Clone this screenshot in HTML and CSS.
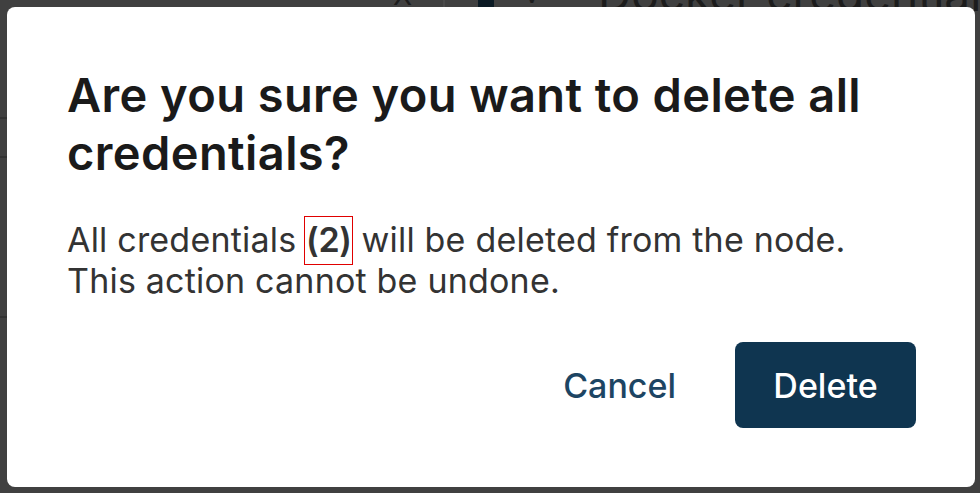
FILE: index.html
```html
<!DOCTYPE html>
<html lang="en">
<head>
<meta charset="utf-8">
<title>Delete all credentials</title>
<link rel="stylesheet" href="styles.css">
</head>
<body>
<div class="backdrop">
  <div class="bg-x">X</div>
  <div class="bg-divider"></div>
  <div class="bg-box"></div>
  <div class="bg-chev">v</div>
  <div class="bg-title">Docker credentials</div>
  <div class="bg-line l1"></div>
  <div class="bg-line l2"></div>
  <div class="bg-line l3"></div>
</div>
<div class="overlay">
  <div class="dialog" role="dialog">
    <h1 class="title">Are you sure you want to delete all<br>credentials?</h1>
    <p class="body">All credentials <strong class="count">(2)</strong> will be deleted from the node.<br>This action cannot be undone.</p>
    <div class="actions">
      <button class="btn-cancel">Cancel</button>
      <button class="btn-delete">Delete</button>
    </div>
  </div>
</div>
</body>
</html>
```

FILE: styles.css
```css
html, body {
  margin: 0;
  padding: 0;
  width: 980px;
  height: 493px;
  overflow: hidden;
  background: #404040;
  font-family: Inter, "Noto Sans", sans-serif;
}

.backdrop {
  position: absolute;
  inset: 0;
  overflow: hidden;
}
.bg-x {
  position: absolute;
  left: 393px;
  top: -22px;
  font-size: 28px;
  color: #1c1c1c;
}
.bg-divider {
  position: absolute;
  left: 443px;
  top: 0;
  width: 2px;
  height: 10px;
  background: #4a4a4a;
}
.bg-box {
  position: absolute;
  left: 478px;
  top: 0;
  width: 16px;
  height: 10px;
  background: #0b1a24;
}
.bg-chev {
  position: absolute;
  left: 524px;
  top: -24px;
  font-size: 28px;
  color: #1c1c1c;
}
.bg-title {
  position: absolute;
  left: 598px;
  top: -34px;
  font-size: 46px;
  color: #1c1c1c;
  white-space: nowrap;
}
.bg-line {
  position: absolute;
  left: 0;
  width: 7px;
  height: 2px;
  background: #333;
}
.l1 { top: 117px; }
.l2 { top: 156px; }
.l3 { top: 316px; }

.overlay {
  position: relative;
  padding: 7px 5px 6px 7px;
}

.dialog {
  background: #fff;
  border-radius: 8px;
  padding: 59px 59px 59px 60px;
  height: 480px;
  box-sizing: border-box;
  display: flex;
  flex-direction: column;
}

.title {
  margin: 0;
  font-size: 47px;
  line-height: 58px;
  font-weight: 600;
  color: #1a1a1a;
  letter-spacing: 0.4px;
}

.body {
  margin: 37px 0 0 0;
  font-size: 34px;
  line-height: 41px;
  color: #333333;
  font-weight: 400;
  letter-spacing: 0.2px;
}

.count {
  position: relative;
  font-weight: 600;
  letter-spacing: -0.3px;
}
.count::after {
  content: "";
  position: absolute;
  left: -2px;
  right: -1px;
  top: -3px;
  bottom: -5px;
  border: 1px solid #e00000;
}

.actions {
  margin-top: auto;
  display: flex;
  justify-content: flex-end;
  align-items: center;
  gap: 59px;
}

.btn-cancel {
  border: none;
  background: none;
  padding: 0;
  font-family: inherit;
  font-size: 34px;
  font-weight: 500;
  color: #1d4563;
}

.btn-delete {
  border: none;
  background: #0f3550;
  color: #ffffff;
  font-family: inherit;
  font-size: 34px;
  font-weight: 500;
  width: 181px;
  height: 86px;
  border-radius: 8px;
}
```
